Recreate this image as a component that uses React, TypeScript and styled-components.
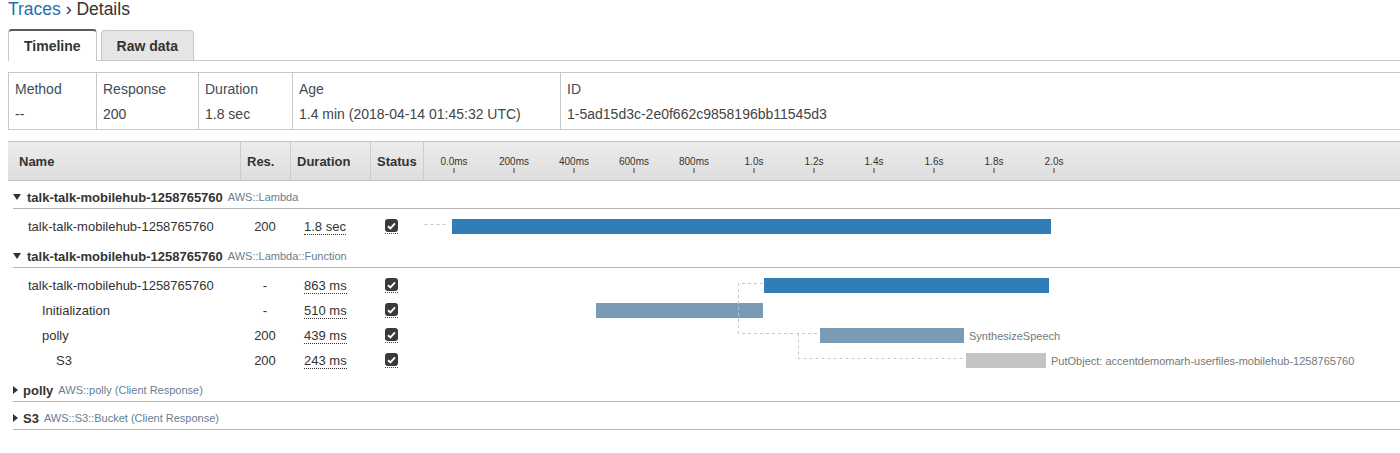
import React from 'react';
import styled, { createGlobalStyle } from 'styled-components';

const GlobalStyle = createGlobalStyle`
  html, body {
    margin: 0;
    padding: 0;
    background: #fff;
  }
  body {
    font-family: "Liberation Sans", Arial, sans-serif;
    color: #333;
    overflow: hidden;
  }
`;

const Page = styled.div`
  padding: 0 0 0 8px;
`;

const Breadcrumb = styled.h1`
  margin: 0;
  font-size: 17.5px;
  line-height: 18px;
  font-weight: normal;
  color: #333;
`;

const Crumb = styled.span`
  color: #236fae;
`;

const Tabs = styled.div`
  display: flex;
  align-items: flex-end;
  gap: 4px;
  margin-top: 11px;
  border-bottom: 1px solid #c8c8c8;
  height: 31px;
`;

const Tab = styled.div<{ $active?: boolean }>`
  box-sizing: border-box;
  height: ${p => (p.$active ? '32px' : '30px')};
  margin-bottom: ${p => (p.$active ? '-1px' : '0')};
  padding: 0 15px;
  line-height: 30px;
  font-size: 14px;
  font-weight: bold;
  color: #333;
  background: ${p => (p.$active ? '#fff' : '#e5e5e5')};
  border: 1px solid #c8c8c8;
  border-top: ${p => (p.$active ? '2px solid #5a5a5a' : '1px solid #c8c8c8')};
  border-bottom: none;
  border-radius: 4px 4px 0 0;
`;

const InfoTable = styled.div`
  display: flex;
  margin-top: 11px;
  border: 1px solid #c8c8c8;
  border-right: none;
`;

const InfoCell = styled.div<{ $w?: number }>`
  box-sizing: border-box;
  width: ${p => (p.$w ? `${p.$w}px` : 'auto')};
  flex: ${p => (p.$w ? 'none' : '1')};
  display: flex;
  flex-direction: column;
  gap: 5px;
  padding: 6px 6px 5px;
  border-right: 1px solid #c8c8c8;
  font-size: 14px;
  line-height: 20px;
  &:last-child {
    border-right: none;
  }
`;

const InfoLabel = styled.div`
  color: #3f4c5a;
`;

const InfoValue = styled.div`
  color: #444;
`;

const TraceTable = styled.div`
  margin-top: 11px;
`;

const HeaderRow = styled.div`
  display: flex;
  height: 40px;
  box-sizing: border-box;
  border-top: 1px solid #c4c4c4;
  border-bottom: 1px solid #c4c4c4;
  background: linear-gradient(#ececec, #dedede);
`;

const HeaderCell = styled.div<{ $w?: number; $pl?: number }>`
  box-sizing: border-box;
  width: ${p => (p.$w ? `${p.$w}px` : 'auto')};
  flex: ${p => (p.$w ? 'none' : '1')};
  display: flex;
  align-items: center;
  padding-left: ${p => p.$pl ?? 6}px;
  font-size: 13px;
  font-weight: bold;
  color: #333;
  & + & {
    border-left: 1px solid #cdcdcd;
  }
`;

const Axis = styled.div`
  display: flex;
  align-self: flex-start;
  padding-top: 14px;
`;

const AxisTick = styled.div`
  width: 60px;
  display: flex;
  flex-direction: column;
  align-items: center;
  font-size: 10px;
  line-height: 11px;
  font-weight: normal;
  color: #333;
  svg {
    display: block;
    margin-top: 1px;
  }
`;

const Group = styled.div`
  margin-left: 5px;
`;

const GroupHeader = styled.div`
  display: flex;
  align-items: center;
  height: 28px;
  box-sizing: border-box;
  padding-top: 5px;
  border-bottom: 1px solid #b4b4b4;
`;

const Caret = styled.span<{ $open: boolean }>`
  width: 0;
  height: 0;
  margin-right: ${p => (p.$open ? '6px' : '5px')};
  ${p =>
    p.$open
      ? `border-left: 4px solid transparent;
         border-right: 4px solid transparent;
         border-top: 6px solid #333;`
      : `border-top: 4.5px solid transparent;
         border-bottom: 4.5px solid transparent;
         border-left: 5px solid #333;`}
`;

const GroupName = styled.span`
  font-size: 13px;
  font-weight: bold;
  color: #333;
  margin-right: 5px;
`;

const GroupType = styled.span`
  font-size: 11px;
  color: #667d92;
`;

const GroupBody = styled.div`
  position: relative;
  padding: 5px 0 1px;
`;

const Row = styled.div`
  display: flex;
  height: 25px;
  align-items: center;
  font-size: 13px;
  color: #333;
`;

const NameCell = styled.div<{ $level: number }>`
  box-sizing: border-box;
  width: 227px;
  padding-left: ${p => 15 + p.$level * 14}px;
  white-space: nowrap;
`;

const ResCell = styled.div`
  width: 50px;
  text-align: center;
`;

const DurationCell = styled.div`
  box-sizing: border-box;
  width: 80px;
  padding-left: 14px;
`;

const Dotted = styled.span`
  line-height: 14px;
  border-bottom: 1px dotted #333;
`;

const StatusCell = styled.div`
  box-sizing: border-box;
  width: 53px;
  padding-left: 15px;
  display: flex;
`;

const CheckWrap = styled.span`
  display: flex;
  padding-bottom: 1px;
  border-bottom: 1px dotted #444;
`;

const CheckBox = styled.span`
  width: 13px;
  height: 13px;
  border-radius: 3px;
  background: #3a3a3a;
  display: flex;
  align-items: center;
  justify-content: center;
`;

const TimelineCell = styled.div`
  flex: 1;
  display: flex;
  align-items: center;
  height: 100%;
`;

const Bar = styled.div<{ $kind: 'main' | 'sub' | 'remote' }>`
  flex: none;
  height: 15px;
  background: ${p =>
    p.$kind === 'main' ? '#317db8' : p.$kind === 'sub' ? '#7a9bb5' : '#c4c4c4'};
`;

const BarLabel = styled.span`
  margin-left: 5px;
  font-size: 11px;
  color: #777;
  white-space: nowrap;
`;

const Connectors = styled.svg`
  position: absolute;
  left: 409px;
  top: 0;
  pointer-events: none;
`;

// timeline scale: origin 30px into the column, 0.2995 px per ms
const X0 = 30;
const PX_PER_MS = 0.2995;
const px = (ms: number) => X0 + ms * PX_PER_MS;

type Span = {
  name: string;
  level: number;
  res: string;
  duration: string;
  start: number;
  end: number;
  kind: 'main' | 'sub' | 'remote';
  label?: string;
};

type TraceGroup = {
  name: string;
  type: string;
  open: boolean;
  spans: Span[];
  links: string[];
};

const groups: TraceGroup[] = [
  {
    name: 'talk-talk-mobilehub-1258765760',
    type: 'AWS::Lambda',
    open: true,
    spans: [
      { name: 'talk-talk-mobilehub-1258765760', level: 0, res: '200', duration: '1.8 sec', start: -3, end: 1997, kind: 'main' },
    ],
    links: ['M2.5,15.5 H27'],
  },
  {
    name: 'talk-talk-mobilehub-1258765760',
    type: 'AWS::Lambda::Function',
    open: true,
    spans: [
      { name: 'talk-talk-mobilehub-1258765760', level: 0, res: '-', duration: '863 ms', start: 1038, end: 1990, kind: 'main' },
      { name: 'Initialization', level: 1, res: '-', duration: '510 ms', start: 477, end: 1035, kind: 'sub' },
      { name: 'polly', level: 1, res: '200', duration: '439 ms', start: 1225, end: 1706, kind: 'sub', label: 'SynthesizeSpeech' },
      { name: 'S3', level: 2, res: '200', duration: '243 ms', start: 1713, end: 1980, kind: 'remote', label: 'PutObject: accentdemomarh-userfiles-mobilehub-1258765760' },
    ],
    links: ['M341,15.5 H316.5 V65.5 H397', 'M376.5,65.5 V90.5 H543'],
  },
  { name: 'polly', type: 'AWS::polly (Client Response)', open: false, spans: [], links: [] },
  { name: 'S3', type: 'AWS::S3::Bucket (Client Response)', open: false, spans: [], links: [] },
];

const ticks = ['0.0ms', '200ms', '400ms', '600ms', '800ms', '1.0s', '1.2s', '1.4s', '1.6s', '1.8s', '2.0s'];

const Check = () => (
  <svg width="9" height="8" viewBox="0 0 9 8">
    <path d="M1 4.2 L3.4 6.4 L8 1.4" fill="none" stroke="#fff" strokeWidth="1.9" />
  </svg>
);

const TickMark = () => (
  <svg width="2" height="5" viewBox="0 0 2 5">
    <rect x="0.5" y="0" width="1" height="5" fill="#444" />
  </svg>
);

const App: React.FC = () => {
  return (
    <Page>
      <GlobalStyle />
      <Breadcrumb>
        <Crumb>Traces</Crumb> › Details
      </Breadcrumb>

      <Tabs>
        <Tab $active>Timeline</Tab>
        <Tab>Raw data</Tab>
      </Tabs>

      <InfoTable>
        <InfoCell $w={88}>
          <InfoLabel>Method</InfoLabel>
          <InfoValue>--</InfoValue>
        </InfoCell>
        <InfoCell $w={102}>
          <InfoLabel>Response</InfoLabel>
          <InfoValue>200</InfoValue>
        </InfoCell>
        <InfoCell $w={94}>
          <InfoLabel>Duration</InfoLabel>
          <InfoValue>1.8 sec</InfoValue>
        </InfoCell>
        <InfoCell $w={268}>
          <InfoLabel>Age</InfoLabel>
          <InfoValue>1.4 min (2018-04-14 01:45:32 UTC)</InfoValue>
        </InfoCell>
        <InfoCell>
          <InfoLabel>ID</InfoLabel>
          <InfoValue>1-5ad15d3c-2e0f662c9858196bb11545d3</InfoValue>
        </InfoCell>
      </InfoTable>

      <TraceTable>
        <HeaderRow>
          <HeaderCell $w={232} $pl={11}>Name</HeaderCell>
          <HeaderCell $w={50}>Res.</HeaderCell>
          <HeaderCell $w={80}>Duration</HeaderCell>
          <HeaderCell $w={53}>Status</HeaderCell>
          <HeaderCell $pl={0}>
            <Axis>
              {ticks.map(t => (
                <AxisTick key={t}>
                  <span>{t}</span>
                  <TickMark />
                </AxisTick>
              ))}
            </Axis>
          </HeaderCell>
        </HeaderRow>

        {groups.map((g, gi) => (
          <Group key={gi}>
            <GroupHeader>
              <Caret $open={g.open} />
              <GroupName>{g.name}</GroupName>
              <GroupType>{g.type}</GroupType>
            </GroupHeader>
            {g.open && (
              <GroupBody>
                {g.spans.map((s, si) => (
                  <Row key={si}>
                    <NameCell $level={s.level}>{s.name}</NameCell>
                    <ResCell>{s.res}</ResCell>
                    <DurationCell>
                      <Dotted>{s.duration}</Dotted>
                    </DurationCell>
                    <StatusCell>
                      <CheckWrap>
                        <CheckBox>
                          <Check />
                        </CheckBox>
                      </CheckWrap>
                    </StatusCell>
                    <TimelineCell>
                      <Bar
                        $kind={s.kind}
                        style={{ marginLeft: Math.round(px(s.start)), width: Math.round(px(s.end) - px(s.start)) }}
                      />
                      {s.label && <BarLabel>{s.label}</BarLabel>}
                    </TimelineCell>
                  </Row>
                ))}
                <Connectors width="700" height={5 + g.spans.length * 25}>
                  {g.links.map((d, li) => (
                    <path key={li} d={d} fill="none" stroke="#c6c6c6" strokeWidth="1" strokeDasharray="3 3" />
                  ))}
                </Connectors>
              </GroupBody>
            )}
          </Group>
        ))}
      </TraceTable>
    </Page>
  );
};

export default App;
